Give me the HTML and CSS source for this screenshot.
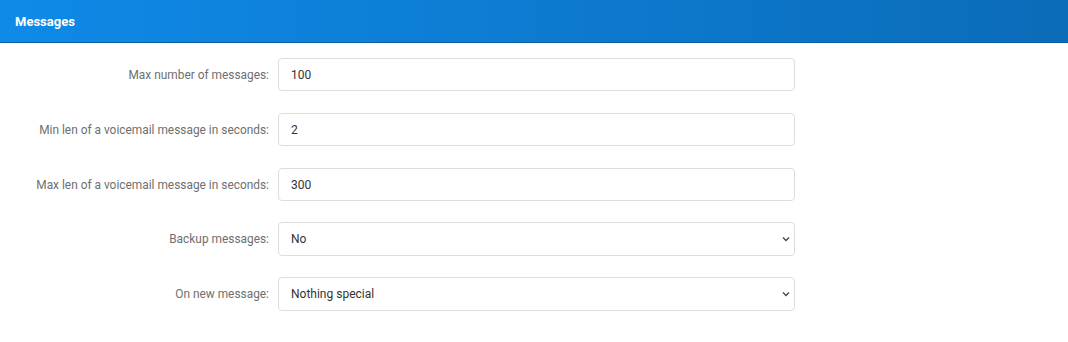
FILE: index.html
```html
<!DOCTYPE html>
<html lang="en">
<head>
    <meta charset="UTF-8">
    <meta name="viewport" content="width=device-width, initial-scale=1.0">
    <title>Messages</title>
    <link rel="stylesheet" href="styles.css">
</head>
<body>
    <div class="panel">
        <div class="panel-heading">Messages</div>

        <form class="panel-body">
            <div class="form-row">
                <label for="maxmsg">Max number of messages:</label>
                <input id="maxmsg" class="form-control" type="text" value="100">
            </div>

            <div class="form-row">
                <label for="minsecs">Min len of a voicemail message in seconds:</label>
                <input id="minsecs" class="form-control" type="text" value="2">
            </div>

            <div class="form-row">
                <label for="maxsecs">Max len of a voicemail message in seconds:</label>
                <input id="maxsecs" class="form-control" type="text" value="300">
            </div>

            <div class="form-row select-row">
                <label for="backup">Backup messages:</label>
                <div class="select-wrap">
                    <select id="backup" class="form-control">
                        <option>No</option>
                        <option>Yes</option>
                    </select>
                    <svg class="caret" width="8" height="6" viewBox="0 0 8 6"><path d="M1 1.5 L4 4.5 L7 1.5" fill="none" stroke="#444" stroke-width="1.3"/></svg>
                </div>
            </div>

            <div class="form-row select-row">
                <label for="onnew">On new message:</label>
                <div class="select-wrap">
                    <select id="onnew" class="form-control">
                        <option>Nothing special</option>
                        <option>Attach to email</option>
                        <option>Delete</option>
                    </select>
                    <svg class="caret" width="8" height="6" viewBox="0 0 8 6"><path d="M1 1.5 L4 4.5 L7 1.5" fill="none" stroke="#444" stroke-width="1.3"/></svg>
                </div>
            </div>
        </form>
    </div>
</body>
</html>
```

FILE: styles.css
```css
* {
    margin: 0;
    padding: 0;
    box-sizing: border-box;
}

body {
    font-family: Roboto, 'Liberation Sans', Arial, sans-serif;
    background: white;
    color: #333;
}

.panel-heading {
    height: 43px;
    padding: 0 15px;
    display: flex;
    align-items: center;
    background: linear-gradient(90deg, #0f8ae8 0%, #0b6cb9 100%);
    border-bottom: 1px solid #0a5fa3;
    color: white;
    font-size: 13px;
    font-weight: bold;
}

.panel-body {
    padding: 15px 0;
}

.form-row {
    display: grid;
    grid-template-columns: 269px 517px;
    column-gap: 9px;
    align-items: center;
    margin-bottom: 22px;
}

.form-row label {
    text-align: right;
    font-size: 11.9px;
    color: #6f6f6f;
}

.form-control {
    width: 100%;
    height: 33px;
    padding: 0 12px;
    border: 1px solid #dedede;
    border-radius: 4px;
    background: white;
    font-family: inherit;
    font-size: 12px;
    color: #333;
    outline: none;
}

.select-row {
    margin-top: -1px;
}

.select-row .form-control {
    height: 34px;
}

.select-wrap {
    position: relative;
}

select.form-control {
    appearance: none;
    -webkit-appearance: none;
}

.caret {
    position: absolute;
    right: 5px;
    top: 14px;
    pointer-events: none;
}
```
